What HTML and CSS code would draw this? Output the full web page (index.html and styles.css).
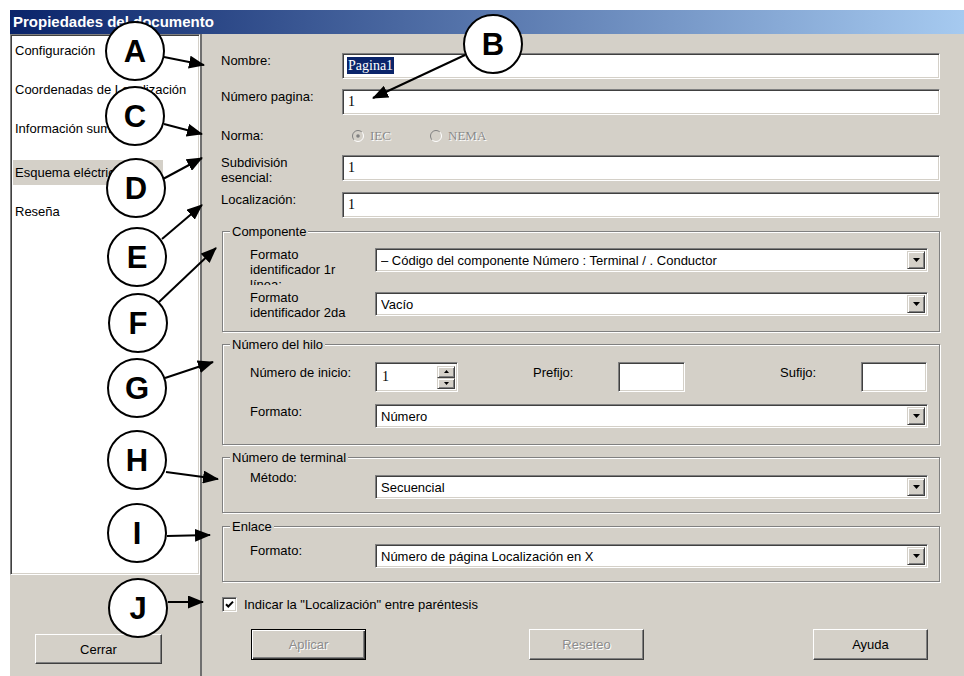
FILE: index.html
```html
<!DOCTYPE html>
<html lang="es">
<head>
<meta charset="utf-8">
<title>Propiedades del documento</title>
<link rel="stylesheet" href="styles.css">
</head>
<body>
<div class="window">
  <div class="titlebar">Propiedades del documento</div>
  <div class="client">
    <aside class="sidebar">
      <ul class="pagelist">
        <li>Configuración</li>
        <li>Coordenadas de Localización</li>
        <li>Información sumaria</li>
        <li class="current"><span>Esquema eléctrico</span></li>
        <li>Reseña</li>
      </ul>
      <div class="sidebar-foot">
        <button class="btn btn-close">Cerrar</button>
      </div>
    </aside>

    <section class="panel">
      <div class="row">
        <span class="lbl">Nombre:</span>
        <div class="edit"><span class="hilite">Pagina1</span></div>
      </div>
      <div class="row row-page">
        <span class="lbl">Número pagina:</span>
        <div class="edit">1</div>
      </div>
      <div class="row row-norm">
        <span class="lbl">Norma:</span>
        <span class="option option-iec">
          <svg class="radio" viewBox="0 0 12 12" width="12" height="12">
            <circle cx="6" cy="6" r="5.5" fill="#d4d0c8"/>
            <path d="M9.9 2.1 A5.5 5.5 0 0 0 2.1 9.9" fill="none" stroke="#808080"/>
            <path d="M2.1 9.9 A5.5 5.5 0 0 0 9.9 2.1" fill="none" stroke="#fff"/>
            <circle cx="6" cy="6" r="1.8" fill="#808080"/>
          </svg>IEC</span>
        <span class="option">
          <svg class="radio" viewBox="0 0 12 12" width="12" height="12">
            <circle cx="6" cy="6" r="5.5" fill="#d4d0c8"/>
            <path d="M9.9 2.1 A5.5 5.5 0 0 0 2.1 9.9" fill="none" stroke="#808080"/>
            <path d="M2.1 9.9 A5.5 5.5 0 0 0 9.9 2.1" fill="none" stroke="#fff"/>
          </svg>NEMA</span>
      </div>
      <div class="row row-sub">
        <span class="lbl">Subdivisión<br>esencial:</span>
        <div class="edit">1</div>
      </div>
      <div class="row row-loc">
        <span class="lbl">Localización:</span>
        <div class="edit">1</div>
      </div>

      <fieldset class="group group-comp">
        <legend>Componente</legend>
        <div class="group-body">
          <div class="grow">
            <span class="glbl clip-1">Formato identificador 1r línea:</span>
            <div class="combo combo-1">
              <span class="combo-text">– Código del componente Número : Terminal / . Conductor</span>
              <span class="drop"><svg viewBox="0 0 7 4" width="7" height="4"><path d="M0 0h7l-3.5 4z"/></svg></span>
            </div>
          </div>
          <div class="grow grow-2">
            <span class="glbl clip-2">Formato identificador 2da línea:</span>
            <div class="combo combo-2">
              <span class="combo-text">Vacío</span>
              <span class="drop"><svg viewBox="0 0 7 4" width="7" height="4"><path d="M0 0h7l-3.5 4z"/></svg></span>
            </div>
          </div>
        </div>
      </fieldset>

      <fieldset class="group group-wire">
        <legend>Número del hilo</legend>
        <div class="group-body wire-body">
          <div class="grow wire-top">
            <span class="glbl pad-lbl">Número de inicio:</span>
            <div class="spin">
              <span class="spin-text">1</span>
              <span class="spin-btns">
                <span class="spin-btn"><svg viewBox="0 0 5 3" width="5" height="3"><path d="M2.5 0L5 3H0z"/></svg></span>
                <span class="spin-btn"><svg viewBox="0 0 5 3" width="5" height="3"><path d="M0 0h5L2.5 3z"/></svg></span>
              </span>
            </div>
            <span class="pre-lbl pad-lbl">Prefijo:</span>
            <div class="box box-pre"></div>
            <span class="suf-lbl pad-lbl">Sufijo:</span>
            <div class="box box-suf"></div>
          </div>
          <div class="grow wire-fmt">
            <span class="glbl">Formato:</span>
            <div class="combo">
              <span class="combo-text">Número</span>
              <span class="drop"><svg viewBox="0 0 7 4" width="7" height="4"><path d="M0 0h7l-3.5 4z"/></svg></span>
            </div>
          </div>
        </div>
      </fieldset>

      <fieldset class="group group-term">
        <legend>Número de terminal</legend>
        <div class="group-body short-body">
          <div class="grow">
            <span class="glbl lift-5">Método:</span>
            <div class="combo">
              <span class="combo-text">Secuencial</span>
              <span class="drop"><svg viewBox="0 0 7 4" width="7" height="4"><path d="M0 0h7l-3.5 4z"/></svg></span>
            </div>
          </div>
        </div>
      </fieldset>

      <fieldset class="group group-link">
        <legend>Enlace</legend>
        <div class="group-body short-body">
          <div class="grow">
            <span class="glbl lift-1">Formato:</span>
            <div class="combo">
              <span class="combo-text">Número de página Localización en X</span>
              <span class="drop"><svg viewBox="0 0 7 4" width="7" height="4"><path d="M0 0h7l-3.5 4z"/></svg></span>
            </div>
          </div>
        </div>
      </fieldset>

      <div class="check-row">
        <span class="checkbox"><svg viewBox="0 0 11 11" width="11" height="11"><path d="M2 5.2 L4.3 7.5 L9 2.6" fill="none" stroke="#000" stroke-width="2"/></svg></span>
        <span class="check-text">Indicar la "Localización" entre paréntesis</span>
      </div>

      <div class="button-row">
        <button class="btn btn-default is-disabled btn-apply">Aplicar</button>
        <button class="btn is-disabled btn-reset">Reseteo</button>
        <button class="btn btn-help">Ayuda</button>
      </div>
    </section>
  </div>
</div>

<svg class="callouts" width="964" height="676" viewBox="0 0 964 676">
  <defs>
    <marker id="tip" viewBox="0 0 16 13" refX="15" refY="6.5" markerWidth="16" markerHeight="13" markerUnits="userSpaceOnUse" orient="auto">
      <path d="M0 0 L16 6.5 L0 13 Z" fill="#000"/>
    </marker>
  </defs>
  <g class="arrows" stroke="#000" stroke-width="2" marker-end="url(#tip)">
    <line x1="164" y1="57" x2="204" y2="65"/>
    <line x1="465" y1="55" x2="373" y2="98"/>
    <line x1="164" y1="124" x2="202" y2="134"/>
    <line x1="163" y1="179" x2="202" y2="158"/>
    <line x1="162" y1="239" x2="202" y2="205"/>
    <line x1="159" y1="302" x2="216" y2="248"/>
    <line x1="165" y1="378" x2="213" y2="362"/>
    <line x1="166" y1="472" x2="218" y2="479"/>
    <line x1="167" y1="536" x2="210" y2="535"/>
    <line x1="168" y1="602" x2="203" y2="602"/>
  </g>
  <g class="bubbles" fill="#fff" stroke="#000" stroke-width="2">
    <circle cx="135" cy="51" r="29"/>
    <circle cx="493" cy="44" r="29"/>
    <circle cx="135" cy="116" r="29"/>
    <circle cx="136" cy="188" r="29"/>
    <circle cx="137" cy="257" r="29"/>
    <circle cx="138" cy="323" r="29"/>
    <circle cx="137" cy="388" r="29"/>
    <circle cx="137" cy="460" r="29"/>
    <circle cx="137" cy="533" r="29"/>
    <circle cx="138" cy="608" r="29"/>
  </g>
  <g class="letters">
    <text x="135" y="62">A</text>
    <text x="493" y="55">B</text>
    <text x="135" y="127">C</text>
    <text x="136" y="199">D</text>
    <text x="137" y="268">E</text>
    <text x="138" y="334">F</text>
    <text x="137" y="399">G</text>
    <text x="137" y="471">H</text>
    <text x="137" y="544">I</text>
    <text x="138" y="619">J</text>
  </g>
</svg>
</body>
</html>
```

FILE: styles.css
```css
* { box-sizing: border-box; }

html, body { margin: 0; padding: 0; }

body {
  position: relative;
  width: 964px;
  height: 676px;
  overflow: hidden;
  background: #fff;
  font-family: "Liberation Sans", Arial, sans-serif;
  font-size: 13px;
  color: #000;
}

/* dialog frame */
.window {
  margin: 10px 0 0 10px;
  height: 666px;
  background: #d4d0c8;
  display: flex;
  flex-direction: column;
}

.titlebar {
  flex: none;
  height: 24px;
  line-height: 24px;
  padding-left: 3px;
  font-size: 15px;
  font-weight: bold;
  color: #fff;
  background: linear-gradient(to right, #0a246a, #a6caf0);
  white-space: nowrap;
  overflow: hidden;
}

.client {
  flex: 1;
  display: flex;
  min-height: 0;
}

/* left page list */
.sidebar {
  flex: none;
  width: 190px;
  display: flex;
  flex-direction: column;
}

.pagelist {
  flex: none;
  height: 541px;
  margin: 0;
  padding: 3px 0 0 0;
  list-style: none;
  background: #fff;
  border: 1px solid;
  border-color: #808080 #fff #fff #808080;
  box-shadow: inset 1px 1px 0 #404040, inset -1px -1px 0 #d4d0c8;
  overflow: hidden;
}

.pagelist li {
  height: 25px;
  line-height: 25px;
  padding-left: 4px;
  margin-bottom: 14px;
  white-space: nowrap;
}

.pagelist li:nth-child(3) { margin-bottom: 19px; }

.pagelist .current span {
  display: inline-block;
  width: 150px;
  margin-left: -2px;
  padding-left: 2px;
  background: #d4d0c8;
}

.sidebar-foot {
  flex: 1;
  padding: 59px 0 0 25px;
}

/* right settings panel */
.panel {
  flex: 1;
  min-width: 0;
  border-left: 2px solid #6f6f6f;
  padding: 19px 24px 0 19px;
}

.row {
  display: flex;
  align-items: flex-start;
}

.lbl {
  flex: none;
  width: 121px;
  line-height: 15px;
}

.edit {
  flex: 1;
  height: 26px;
  background: #fff;
  border: 1px solid;
  border-color: #808080 #fff #fff #808080;
  box-shadow: inset 1px 1px 0 #404040, inset -1px -1px 0 #d4d0c8;
  padding: 0 5px;
  font-family: "Liberation Serif", "Times New Roman", serif;
  font-size: 14px;
  line-height: 24px;
  white-space: nowrap;
}

.hilite {
  display: inline-block;
  margin-left: -1px;
  padding: 0 1px;
  line-height: 17px;
  background: #0a246a;
  color: #fff;
}

.row-page { margin-top: 10px; }

.row-norm {
  margin-top: 11px;
  height: 20px;
  align-items: center;
}
.row-norm .lbl { line-height: 20px; }

.option {
  display: flex;
  align-items: center;
  gap: 6px;
  font-family: "Liberation Serif", "Times New Roman", serif;
  font-size: 13px;
  color: #8a8a8a;
  text-shadow: 1px 1px 0 #fff;
}
.option-iec { width: 78px; margin-left: 10px; }
.radio { flex: none; }

.row-sub { margin-top: 9px; }
.row-loc { margin-top: 7px; }

/* group boxes */
.group {
  margin: 6px 0 0 1px;
  padding: 0;
  min-width: 0;
  border: 1px solid #808080;
  box-shadow: inset 1px 1px 0 #fff, 1px 1px 0 #fff;
}

.group legend {
  margin-left: 7px;
  padding: 0 2px;
  line-height: 15px;
  background: #d4d0c8;
}

.group-wire { margin-top: 5px; }
.group-term { margin-top: 5px; }

.group-body { padding: 8px 11px 8px 27px; }
.wire-body { padding: 10px 11px 16px 27px; }
.short-body { padding: 10px 11px 13px 27px; }

.grow {
  display: flex;
  align-items: flex-start;
}
.grow-2 { margin-top: 5px; }

.glbl {
  flex: none;
  width: 110px;
  margin-right: 15px;
  line-height: 15px;
  overflow: hidden;
}
.clip-1 { height: 38px; }
.clip-2 { height: 33px; }
.lift-5 { margin-top: -5px; }
.lift-1 { margin-top: -1px; }
.pad-lbl { padding-top: 3px; }

.combo {
  flex: 1;
  height: 24px;
  display: flex;
  align-items: center;
  background: #fff;
  border: 1px solid;
  border-color: #808080 #fff #fff #808080;
  box-shadow: inset 1px 1px 0 #404040, inset -1px -1px 0 #d4d0c8;
  padding: 2px 2px 2px 5px;
}
.combo-1 { margin-top: 1px; }
.combo-2 { margin-top: 2px; }

.combo-text {
  flex: 1;
  white-space: nowrap;
  overflow: hidden;
}

.drop {
  flex: none;
  width: 18px;
  height: 18px;
  display: flex;
  align-items: center;
  justify-content: center;
  background: #d4d0c8;
  border: 1px solid;
  border-color: #d4d0c8 #404040 #404040 #d4d0c8;
  box-shadow: inset 1px 1px 0 #fff, inset -1px -1px 0 #808080;
}

/* start number spinner and prefix/suffix boxes */
.wire-top { height: 30px; }

.spin {
  flex: none;
  width: 83px;
  height: 30px;
  display: flex;
  background: #fff;
  border: 1px solid;
  border-color: #808080 #fff #fff #808080;
  box-shadow: inset 1px 1px 0 #404040, inset -1px -1px 0 #d4d0c8;
  padding: 2px 2px 2px 6px;
}

.spin-text {
  flex: 1;
  font-family: "Liberation Serif", "Times New Roman", serif;
  font-size: 14px;
  line-height: 24px;
}

.spin-btns {
  flex: none;
  width: 18px;
  display: flex;
  flex-direction: column;
  padding-top: 1px;
}

.spin-btn {
  height: 12px;
  display: flex;
  align-items: center;
  justify-content: center;
  background: #d4d0c8;
  border: 1px solid;
  border-color: #d4d0c8 #404040 #404040 #d4d0c8;
  box-shadow: inset 1px 1px 0 #fff, inset -1px -1px 0 #808080;
}

.pre-lbl { flex: none; width: 85px; margin-left: 75px; }
.suf-lbl { flex: none; width: 81px; margin-left: 95px; }

.box {
  flex: none;
  height: 30px;
  background: #fff;
  border: 1px solid;
  border-color: #808080 #fff #fff #808080;
  box-shadow: inset 1px 1px 0 #404040, inset -1px -1px 0 #d4d0c8;
}
.box-pre { width: 67px; }
.box-suf { width: 66px; }

.wire-fmt { margin-top: 12px; }

/* checkbox */
.check-row {
  margin: 14px 0 0 1px;
  height: 17px;
  display: flex;
  align-items: center;
}

.checkbox {
  flex: none;
  width: 15px;
  height: 15px;
  display: flex;
  align-items: center;
  justify-content: center;
  background: #fff;
  border: 1px solid;
  border-color: #808080 #fff #fff #808080;
  box-shadow: inset 1px 1px 0 #404040, inset -1px -1px 0 #d4d0c8;
}

.check-text { margin-left: 7px; }

/* push buttons */
.button-row {
  margin-top: 16px;
  display: flex;
}

.btn {
  width: 115px;
  height: 31px;
  padding: 0;
  font: inherit;
  color: #000;
  background: #d4d0c8;
  border: 1px solid;
  border-color: #fff #404040 #404040 #fff;
  box-shadow: inset -1px -1px 0 #808080;
}

.btn-close { width: 127px; height: 30px; }

.btn-default {
  border-color: #000;
  box-shadow: inset 1px 1px 0 #fff, inset -1px -1px 0 #404040, inset -2px -2px 0 #808080;
}

.is-disabled {
  color: #8c8c8c;
  text-shadow: 1px 1px 0 #fff;
}

.btn-apply { margin-left: 30px; }
.btn-reset { margin-left: 163px; }
.btn-help { margin-left: 169px; }

/* lettered callouts drawn over the dialog */
.callouts {
  position: absolute;
  left: 0;
  top: 0;
  pointer-events: none;
}

.letters text {
  font-family: "Liberation Sans", Arial, sans-serif;
  font-size: 31px;
  font-weight: bold;
  text-anchor: middle;
  fill: #000;
}
```
